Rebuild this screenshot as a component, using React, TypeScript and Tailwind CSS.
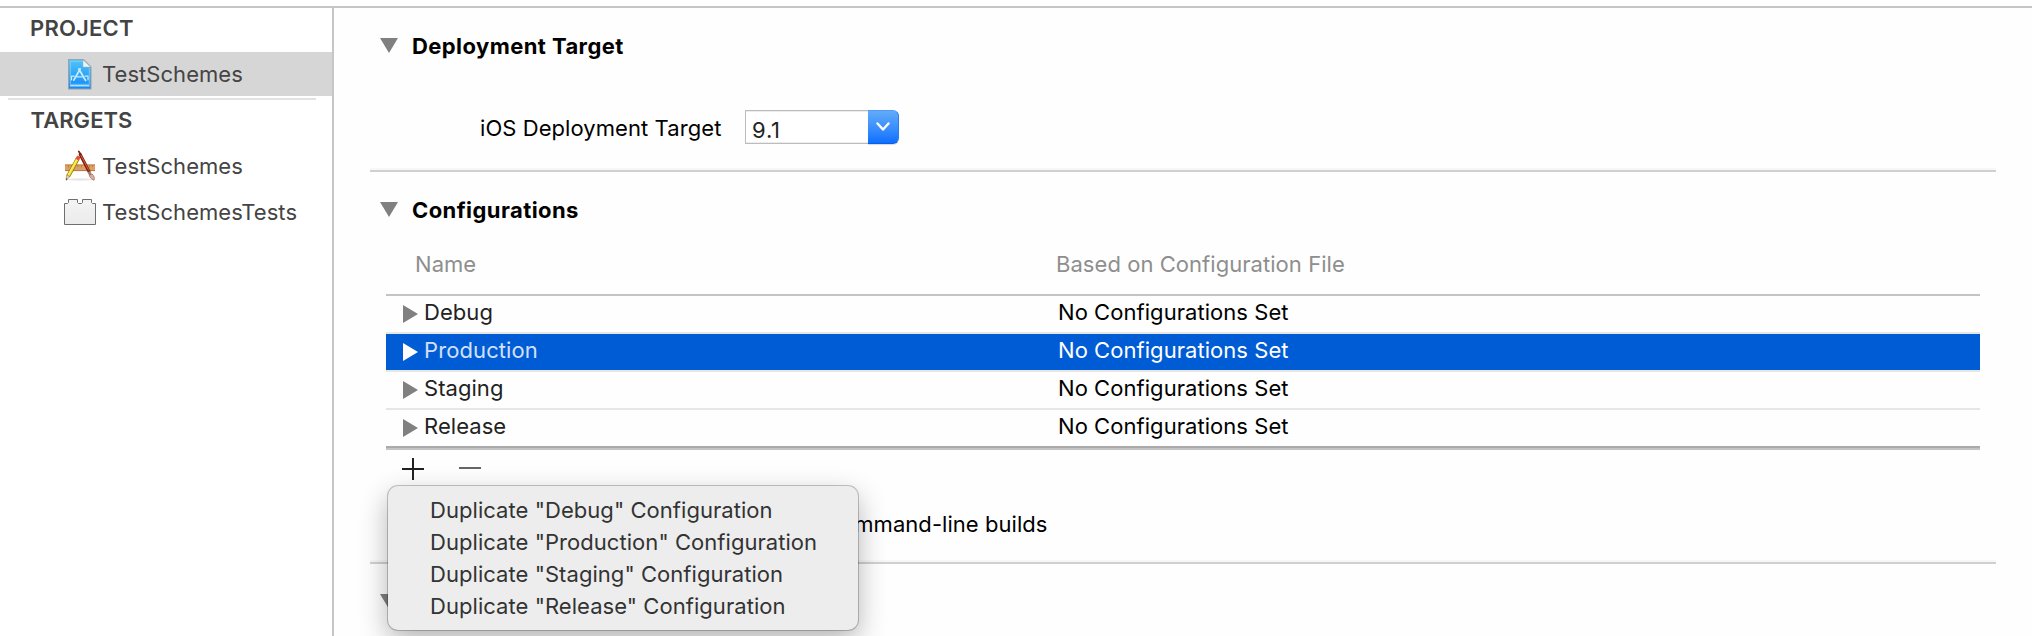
import type { ReactNode } from "react";

const configurations = ["Debug", "Production", "Staging", "Release"];
const selected = "Production";

function ProjectIcon() {
  return (
    <svg width="26" height="32" viewBox="0 0 26 32" className="block">
      <defs>
        <linearGradient id="doc" x1="0" y1="0" x2="0" y2="1">
          <stop offset="0" stopColor="#52c3f6" />
          <stop offset="1" stopColor="#118af9" />
        </linearGradient>
      </defs>
      <path d="M1 1h15.800l7.700 7.700V31.500H1z" fill="#8d8d8d" opacity="0.75" />
      <path d="M2 1.800h14.200L23.500 9v21.500H2z" fill="url(#doc)" />
      <path d="M15.300 3.300H3.300v23h19V9.800" fill="none" stroke="#8fd6fa" strokeWidth="0.700" />
      <path d="M3 27.800h19.500" stroke="#d8f0ff" strokeWidth="1.200" />
      <path d="M16 1.800 23.500 9H16z" fill="#f2f2f2" stroke="#a8b4bb" strokeWidth="0.500" />
      <g fill="none" stroke="#c9ecfd" strokeLinecap="round">
        <path d="M13.200 11 6.800 22.200M11.800 11l6.800 11.500" strokeWidth="1.700" />
        <path d="M9.800 18.800h5.600M4.500 18.200h2.700M18 18.200h3M4.500 18.200v3.600M21 18.200v3.600" strokeWidth="1.200" />
      </g>
    </svg>
  );
}

function AppIcon() {
  return (
    <svg width="32" height="32" viewBox="0 0 32 32" className="block">
      <ellipse cx="16" cy="29.500" rx="13" ry="1.200" fill="#000" opacity="0.1" />
      <rect x="1" y="14.500" width="30" height="6.500" fill="#dba06a" />
      <path d="M1 15h30" stroke="#c58349" />
      <path d="M1 20.600h30" stroke="#b9733a" strokeWidth="0.900" />
      <path d="M4.500 15.500v2M7.500 15.500v1.500M10.500 15.500v2M14 15.500v1.500M17.500 15.500v2M22 15.500v1.500M25.500 15.500v2M28.500 15.500v1.500" stroke="#a9672c" strokeWidth="0.700" />
      <path d="M4.300 26 13.800 8.500" stroke="#85720f" strokeWidth="4" />
      <path d="M4.300 25.800 13.600 8.700" stroke="#f4e02a" strokeWidth="2.800" />
      <path d="M4.300 25 13 9" stroke="#fff68c" strokeWidth="0.800" />
      <path d="M13.200 9.600 14.900 6.400" stroke="#e64a45" strokeWidth="3.800" />
      <path d="M2.600 24.800 2 30.300 6 26.700z" fill="#ead0a0" stroke="#8c6a35" strokeWidth="0.500" />
      <path d="M2.200 28.300 2 30.300l1.500-1.400z" fill="#333" />
      <path d="M14.800 1.500 16.500 4" stroke="#8b2412" strokeWidth="1.800" strokeLinecap="round" />
      <path d="M16.200 4.500 25 21.500" stroke="#7c1d0d" strokeWidth="3" strokeLinecap="round" />
      <path d="M16.800 5 24.800 20.500" stroke="#cf5434" strokeWidth="1.100" />
      <path d="M24.800 21.800 26.600 25" stroke="#9a8478" strokeWidth="2.900" />
      <path d="M25.300 25.300c.6 2.400 2.200 4 4.700 5 .9-2.200.3-4.300-2-6.300z" fill="#dcae98" stroke="#8f5b45" strokeWidth="0.600" />
    </svg>
  );
}

function TestBundleIcon() {
  return (
    <svg width="32" height="27" viewBox="0 0 32 27" className="block">
      <defs>
        <linearGradient id="brick" x1="0" y1="0" x2="0" y2="1">
          <stop offset="0" stopColor="#f4f4f4" />
          <stop offset="1" stopColor="#ebebeb" />
        </linearGradient>
      </defs>
      <path
        d="M.5 25.500V4.500H3.500L4.500 3.500V.500H13.500V3.500L14.500 4.500H17.500L18.500 3.500V.500H27.500V3.500L28.500 4.500H31.500V25.500z"
        fill="url(#brick)"
        stroke="#6e6e6e"
      />
    </svg>
  );
}

function SidebarRow({ icon, label, active = false }: { icon: ReactNode; label: string; active?: boolean }) {
  return (
    <div className={active ? "flex h-11 items-center bg-[#d6d6d6]" : "flex h-[46px] items-center"}>
      <div className="ml-16 flex w-8 justify-center">{icon}</div>
      <span className="ml-1.5">{label}</span>
    </div>
  );
}

function TriangleDown() {
  return (
    <svg width="18" height="15" viewBox="0 0 18 15" className="block shrink-0">
      <path d="M0 0h18L9 15z" fill="#808080" />
    </svg>
  );
}

function TriangleRight({ active }: { active: boolean }) {
  return (
    <svg width="15" height="18" viewBox="0 0 15 18" className="block shrink-0">
      <path d="M0 0v18l15-9z" fill={active ? "#ffffff" : "#808080"} />
    </svg>
  );
}

function SectionTitle({ children }: { children: ReactNode }) {
  return (
    <div className="flex h-7 items-center pl-[10px]">
      <div className="pb-px">
        <TriangleDown />
      </div>
      <h2 className="ml-[14px] text-[22px] leading-7 font-bold tracking-[0.42px]">{children}</h2>
    </div>
  );
}

function Divider() {
  return <div className="mr-9 h-1 border-b-2 border-[#d0d0d0] bg-[#f7f7f7]" />;
}

export default function App() {
  return (
    <div className="relative h-[636px] w-[2032px] overflow-hidden bg-white pt-1.5 font-['Inter','Liberation_Sans',sans-serif] text-[22px] leading-7 tracking-[0.05px] whitespace-nowrap text-black">
      <div className="flex h-full border-t-2 border-[#c6c6c6]">
        <aside className="w-[334px] shrink-0 border-r-2 border-[#c6c6c6] text-[#444444]">
          <div className="flex h-11 items-center pb-1 pl-[30px] font-semibold tracking-[0.2px]">PROJECT</div>
          <SidebarRow icon={<ProjectIcon />} label="TestSchemes" active />
          <div className="mt-0.5 mr-4 ml-2 h-0.5 bg-[#e2e2e2]" />
          <div className="flex h-[43px] items-center pb-[3px] pl-[30.500px] font-semibold">TARGETS</div>
          <SidebarRow icon={<AppIcon />} label="TestSchemes" />
          <SidebarRow icon={<TestBundleIcon />} label="TestSchemesTests" />
        </aside>

        <main className="flex-1 bg-[#fefefe] pl-9">
          <section className="h-[160px] pt-6">
            <SectionTitle>Deployment Target</SectionTitle>
            <div className="mt-[50px] flex h-[34px] items-center">
              <label className="ml-[110px] w-[265px] pt-0.5 tracking-[0.07px]">iOS Deployment Target</label>
              <div className="flex h-[34px] w-[154px]">
                <div className="flex flex-1 items-center border border-r-0 border-[#bcbcbc] bg-white pt-[5px] pl-[6px] tracking-[0.8px] text-[#222222] shadow-[inset_0_1px_0_#ececec,inset_0_-1px_0_#ececec]">
                  9.1
                </div>
                <div className="flex w-[31px] items-center justify-center rounded-r-[6px] border border-l-0 border-t-[#4b9cf7] border-r-[#2a7cf5] border-b-[#0a5fe8] bg-linear-to-b from-[#62abfa] to-[#0a70ff] shadow-[0_1px_1px_rgba(0,0,0,0.15)]">
                  <svg width="14" height="10" viewBox="0 0 14 10" className="block">
                    <path d="M1.500 1.500 7 7.500l5.500-6" fill="none" stroke="#fff" strokeWidth="2.400" strokeLinecap="round" strokeLinejoin="round" />
                  </svg>
                </div>
              </div>
            </div>
          </section>
          <Divider />

          <section className="h-[388px] pt-6">
            <SectionTitle>Configurations</SectionTitle>
            <div className="mt-[26px] mr-[52px] ml-4">
              <div className="flex h-[46px] border-b-2 border-[#c4c4c4] pl-[29px] text-[#8e8e8e]">
                <span className="w-[641px]">Name</span>
                <span>Based on Configuration File</span>
              </div>
              {configurations.map((name) => {
                const active = name === selected;
                return (
                  <div
                    key={name}
                    className={
                      active
                        ? "flex h-[38px] items-center border-b-2 border-[#e6e6e6] bg-[#005cd5] bg-clip-padding pl-[17px] text-white"
                        : "flex h-[38px] items-center border-b-2 border-[#e6e6e6] pl-[17px] last:border-[#aaaaaa]"
                    }
                  >
                    <TriangleRight active={active} />
                    <span className={active ? "ml-1.5 w-[634px] pb-1 tracking-[0.1px] text-[#d3e1f7]" : "ml-1.5 w-[634px] pb-1 text-[#222222]"}>
                      {name}
                    </span>
                    <span className="pb-1">No Configurations Set</span>
                  </div>
                );
              })}
            </div>
            <div className="mr-[52px] ml-4 h-0.5 bg-[#c4c4c4]" />
            <div className="mt-2 ml-8 flex h-[22px] gap-[35px]">
              <svg width="22" height="22" viewBox="0 0 22 22" className="block">
                <path d="M0 11h22M11 0v22" stroke="#222" strokeWidth="2" />
              </svg>
              <svg width="22" height="22" viewBox="0 0 22 22" className="block">
                <path d="M0 10h22" stroke="#666" strokeWidth="2" />
              </svg>
            </div>
            <div className="mt-[30px] flex w-[677.500px] justify-end">command-line builds</div>
          </section>
          <Divider />
          <div className="pt-[30px] pl-[10px]">
            <TriangleDown />
          </div>
        </main>
      </div>

      <ul className="absolute top-[486px] left-[388px] h-[144px] w-[470px] rounded-[10px] bg-[#ededed] pt-2 pl-[42px] tracking-[0.05px] text-[#333333] shadow-[0_0_0_1px_rgba(0,0,0,0.22),0_10px_28px_rgba(0,0,0,0.3)]">
        {configurations.map((name) => (
          <li key={name} className="h-8 leading-8">
            Duplicate "{name}" Configuration
          </li>
        ))}
      </ul>
    </div>
  );
}
